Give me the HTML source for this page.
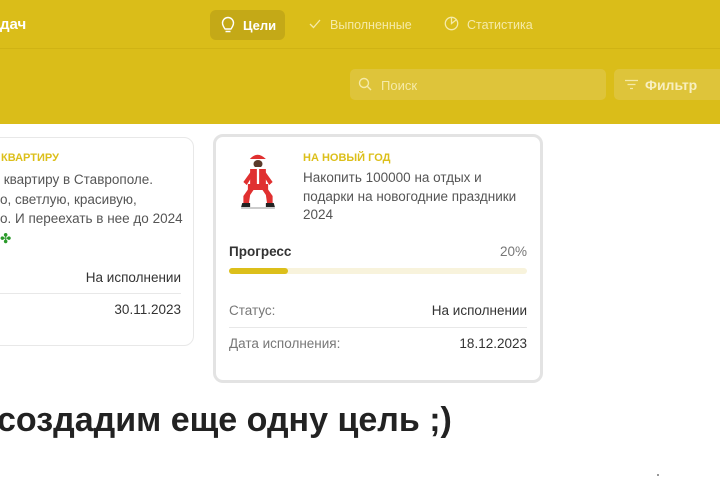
<!DOCTYPE html>
<html><head><meta charset="utf-8">
<style>
*{margin:0;padding:0;box-sizing:border-box}
body{width:720px;height:480px;overflow:hidden;background:#fff;font-family:"Liberation Sans","DejaVu Sans",sans-serif;position:relative}
.y{position:absolute;left:0;top:0;width:720px;height:124px;background:#dabd19}
.sep{position:absolute;left:0;top:48px;width:720px;height:1px;background:#d0b314}
.abs{position:absolute}
.nav{color:#f5eaa8;font-size:13px}
.card{position:absolute;background:#fff;border-radius:10px}
.g{color:#777;font-size:13.5px}
.d{color:#333;font-size:13.5px}
.r{text-align:right;white-space:nowrap}
</style></head><body>
<div class="y"></div><div class="sep"></div>
<div class="abs" style="left:0;top:16px;color:#fff;font-weight:bold;font-size:15px">дач</div>
<div class="abs" style="left:210px;top:10px;width:75px;height:30px;background:#c4a917;border-radius:6px"></div>
<svg class="abs" style="left:221px;top:16px" width="14" height="18" viewBox="0 0 14 18"><path d="M4 13 C2 10 1.5 9 1.5 7 A5.5 5.5 0 0 1 12.5 7 C12.5 9 12 10 10 13 Z M4.5 15.5 H9.5" fill="none" stroke="#fff" stroke-width="1.4" stroke-linejoin="round"/></svg>
<div class="abs" style="left:243px;top:18px;color:#fff;font-weight:bold;font-size:13px">Цели</div>
<svg class="abs" style="left:309px;top:19px" width="12" height="10"><path d="M1 5 L4.5 8.5 L11 1" fill="none" stroke="#f5eaa8" stroke-width="1.3"/></svg>
<div class="abs nav" style="left:330px;top:18px;font-size:12.5px">Выполненные</div>
<svg class="abs" style="left:444px;top:16px" width="15" height="15" viewBox="0 0 15 15"><circle cx="7.5" cy="7.5" r="6.2" fill="none" stroke="#f5eaa8" stroke-width="1.3"/><path d="M7.5 1.3 V7.5 L12 4" fill="none" stroke="#f5eaa8" stroke-width="1.3"/></svg>
<div class="abs nav" style="left:467px;top:18px;font-size:12.5px">Статистика</div>
<div class="abs" style="left:350px;top:69px;width:256px;height:31px;background:#dec43a;border-radius:5px"></div>
<svg class="abs" style="left:358px;top:77px" width="14" height="14"><circle cx="6" cy="6" r="4.5" fill="none" stroke="#f5eaa8" stroke-width="1.4"/><path d="M9.5 9.5 L13 13" stroke="#f5eaa8" stroke-width="1.4"/></svg>
<div class="abs nav" style="left:381px;top:78px">Поиск</div>
<div class="abs" style="left:614px;top:69px;width:120px;height:31px;background:#dec43a;border-radius:5px"></div>
<svg class="abs" style="left:625px;top:79px" width="14" height="12"><path d="M0 1.5 H13 M2.5 5.5 H10.5 M5 9.5 H8" stroke="#f5eaa8" stroke-width="1.3"/></svg>
<div class="abs" style="left:645px;top:77px;color:#f8efc0;font-weight:bold;font-size:14px">Фильтр</div>

<div class="card" style="left:-20px;top:137px;width:214px;height:209px;border:1px solid #e8e8e8"></div>
<div class="abs" style="left:1px;top:152px;color:#dcbf1a;font-weight:bold;font-size:11px">КВАРТИРУ</div>
<div class="abs d" style="left:0;top:170px;line-height:19.5px;color:#555;font-size:13.5px;white-space:nowrap">&nbsp;квартиру в Ставрополе.<br>о, светлую, красивую,<br>о. И переехать в нее до 2024<br><span style="color:#2a9a2a">✤</span></div>
<div class="abs d r" style="right:539px;top:270px">На исполнении</div>
<div class="abs" style="left:0;top:293px;width:181px;height:1px;background:#e8e8e8"></div>
<div class="abs d r" style="right:539px;top:302px">30.11.2023</div>

<div class="card" style="left:213px;top:134px;width:330px;height:249px;border:3px solid #e3e3e3"></div>
<svg class="abs" style="left:240px;top:150px" width="36" height="62" viewBox="0 0 32 62" preserveAspectRatio="none">
<path d="M8 10 Q15 0 23 9 Z" fill="#e03030"/><rect x="8" y="9" width="16" height="3" fill="#fff"/>
<circle cx="16" cy="14" r="4" fill="#5a3a2a"/><path d="M12 17 Q16 23 20 17 Z" fill="#fff"/>
<rect x="9" y="19" width="14" height="16" fill="#e03030"/><rect x="15" y="19" width="2" height="16" fill="#fff"/>
<path d="M10 21 L3 32 L6 35 L11 26 Z M22 21 L29 32 L26 35 L21 26 Z" fill="#e03030"/>
<rect x="7" y="34" width="18" height="6" fill="#e03030"/>
<path d="M8 38 L3 46 L3 53 L8 53 L9 45 L12 40 Z M24 38 L29 46 L29 53 L24 53 L23 45 L20 40Z" fill="#e03030"/>
<path d="M2 53 H9 V57 H1 Z M23 53 H30 L31 57 H23 Z" fill="#222"/>
<rect x="1" y="57" width="30" height="2" fill="#ccc"/></svg>
<div class="abs" style="left:303px;top:152px;color:#dcbf1a;font-weight:bold;font-size:11px">НА НОВЫЙ ГОД</div>
<div class="abs" style="left:303px;top:169px;font-size:13.5px;line-height:18.5px;color:#555">Накопить 100000 на отдых и<br>подарки на новогодние праздники<br>2024</div>
<div class="abs" style="left:229px;top:244px;font-weight:bold;font-size:13.5px;color:#333">Прогресс</div>
<div class="abs g r" style="right:193px;top:244px">20%</div>
<div class="abs" style="left:229px;top:268px;width:298px;height:6px;background:#f8f3dc;border-radius:3px"></div>
<div class="abs" style="left:229px;top:268px;width:59px;height:6px;background:#dcbf1a;border-radius:3px"></div>
<div class="abs g" style="left:229px;top:303px">Статус:</div>
<div class="abs d r" style="right:193px;top:303px">На исполнении</div>
<div class="abs" style="left:229px;top:327px;width:298px;height:1px;background:#e8e8e8"></div>
<div class="abs g" style="left:229px;top:336px">Дата исполнения:</div>
<div class="abs d r" style="right:193px;top:336px">18.12.2023</div>

<div class="abs" style="left:-3px;top:401px;font-weight:bold;font-size:34px;color:#222">создадим еще одну цель ;)</div>
<div class="abs" style="left:657px;top:474px;width:2px;height:2px;background:#999"></div>
</body></html>
